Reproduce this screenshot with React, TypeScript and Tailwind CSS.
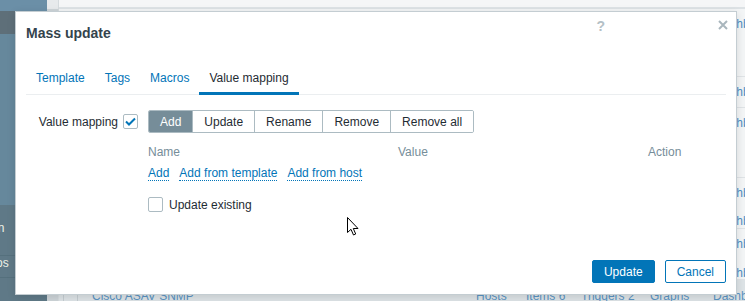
import React from "react";

const tabs = ["Template", "Tags", "Macros", "Value mapping"];
const ops = ["Add", "Update", "Rename", "Remove", "Remove all"];

function Check({ checked }: { checked?: boolean }) {
  return (
    <span className="flex h-[15px] w-[15px] shrink-0 items-center justify-center rounded-[2px] border border-[#acbbc2] bg-white">
      {checked ? (
        <svg width="11" height="9" viewBox="0 0 11 9" fill="none">
          <path d="M1 4.5 L4 7.5 L10 1.5" stroke="#0275b8" strokeWidth="2" />
        </svg>
      ) : null}
    </span>
  );
}

function Backdrop() {
  return (
    <div className="flex h-full">
      {/* Sidebar */}
      <aside className="flex w-[47px] shrink-0 flex-col overflow-hidden bg-[#66889c] text-[12px] leading-[14px] text-[#eef1e6]">
        <div className="h-[11px] bg-[#6b8fa7]" />
        <div className="h-[23px] bg-[#5e6f79]" />
        <div className="h-[171px]" />
        <div className="h-[50px] whitespace-nowrap bg-[#5f7987] pt-[16px]">
          <span className="-ml-[9px] block">on</span>
        </div>
        <div className="h-[22px] whitespace-nowrap border-t border-[#55707d] bg-[#5f7987] pt-[0px]">
          <span className="-ml-[4px] block">os</span>
        </div>
        <div className="flex-1 border-t border-[#55707d] bg-[#5f7987]" />
      </aside>

      {/* Gutter */}
      <div className="flex w-[11px] shrink-0 flex-col bg-[#cdd4d8]">
        <div className="h-[9px] bg-[#e7eaec]" />
      </div>

      {/* Table */}
      <main className="flex min-w-0 flex-1 flex-col overflow-hidden whitespace-nowrap border-l border-[#d5dbde] bg-[#f3f5f6] text-[12px] leading-[14px] text-[#4f8fc4]">
        <div className="h-[9px] shrink-0 border-b-2 border-[#dde2e5] bg-[#f5f6f7]" />
        <div className="h-[68px] shrink-0 border-b border-[#dfe3e6] pt-[8px] pl-[656px]">Dashboards</div>
        <div className="h-[31px] shrink-0 border-b border-[#dfe3e6] pt-[8px] pl-[656px]">Dashboards</div>
        <div className="h-[70px] shrink-0 border-b border-[#dfe3e6] pt-[8px] pl-[656px]">Dashboards</div>
        <div className="flex h-[51px] shrink-0 flex-col gap-[14px] border-b border-[#dfe3e6] pt-[8px] pl-[656px]">
          <span>Dashboards</span>
          <span>Dashboards</span>
        </div>
        <div className="flex h-[51px] shrink-0 flex-col gap-[15px] border-b border-[#dfe3e6] pt-[8px] pl-[656px]">
          <span>Dashboards</span>
          <span>Dashboards</span>
        </div>
        <div className="flex flex-1 bg-[#dde3e6] text-[#5a93c2]">
          <div className="w-[4px] shrink-0" />
          <div className="w-[15px] shrink-0 border-x border-[#c5cdd1]" />
          <div className="w-[398px] shrink-0 pt-[9px] pl-[14px]">Cisco ASAV SNMP</div>
          <div className="w-[50px] shrink-0 pt-[9px]">Hosts</div>
          <div className="w-[55px] shrink-0 pt-[9px]">Items 6</div>
          <div className="w-[69px] shrink-0 pt-[9px]">Triggers 2</div>
          <div className="w-[63px] shrink-0 pt-[9px]">Graphs</div>
          <div className="shrink-0 pt-[9px]">Dashboards</div>
        </div>
      </main>
    </div>
  );
}

export default function App() {
  return (
    <div className="relative h-[301px] w-[745px] overflow-hidden font-['Liberation_Sans',Arial,sans-serif] text-[12px]">
      <Backdrop />

      {/* Mass update dialog */}
      <div className="absolute left-[15px] top-[11px] flex h-[284px] w-[722px] flex-col border border-[#c4cdd2] bg-white px-[10px] pb-[11px] pt-[13px] shadow-[0_2px_8px_rgba(0,0,0,0.12)]">
        <span className="absolute right-[131px] top-[6px] text-[14px] font-bold leading-[16px] text-[#b4c0c6]">?</span>
        <svg className="absolute right-[8px] top-[8px]" width="10" height="10" viewBox="0 0 10 10">
          <path d="M1 1 L9 9 M9 1 L1 9" stroke="#a9b6bd" strokeWidth="2" />
        </svg>

        <h4 className="text-[14px] font-bold leading-[16px] text-[#34434c]">Mass update</h4>

        <div className="mt-[22px] flex border-b border-[#ebeef0]">
          {tabs.map((t, i) => {
            const active = i === tabs.length - 1;
            return (
              <div
                key={t}
                className={`-mb-px flex h-[32px] items-center border-b-[3px] px-[10px] leading-[14px] ${
                  active ? "border-[#0275b8] text-[#1f2c33]" : "border-transparent text-[#0275b8]"
                }`}
              >
                {t}
              </div>
            );
          })}
        </div>

        <div className="mt-[15px] flex gap-[10px]">
          <div className="flex h-[23px] w-[112px] items-center justify-end gap-[5px] text-[#1f2c33]">
            <span className="leading-[14px]">Value mapping</span>
            <Check checked />
          </div>

          <div className="flex flex-col">
            <div className="flex h-[23px] w-fit overflow-hidden rounded-[2px] border border-[#acbbc2]">
              {ops.map((o, i) => (
                <div
                  key={o}
                  className={`flex items-center px-[11px] leading-[14px] ${i > 0 ? "border-l border-[#acbbc2]" : ""} ${
                    i === 0 ? "bg-[#768d99] text-white" : "bg-white text-[#1f2c33]"
                  }`}
                >
                  {o}
                </div>
              ))}
            </div>

            <div className="mt-[8px] grid w-[578px] grid-cols-[250px_250px_1fr] text-[#768d99]">
              <div className="flex h-[22px] items-center leading-[14px]">Name</div>
              <div className="flex h-[22px] items-center leading-[14px]">Value</div>
              <div className="flex h-[22px] items-center leading-[14px]">Action</div>
            </div>
            <div className="flex h-[21px] items-center gap-[10px] text-[#0275b8]">
              <span className="border-b border-dotted border-[#0275b8] leading-[14px]">Add</span>
              <span className="border-b border-dotted border-[#0275b8] leading-[14px]">Add from template</span>
              <span className="border-b border-dotted border-[#0275b8] leading-[14px]">Add from host</span>
            </div>

            <div className="mt-[13px] flex items-center gap-[6px] text-[#1f2c33]">
              <Check />
              <span className="leading-[14px]">Update existing</span>
            </div>
          </div>
        </div>

        <div className="mt-auto flex justify-end gap-[10px]">
          <button className="h-[23px] rounded-[2px] border border-[#0275b8] bg-[#0275b8] px-[11px] leading-[14px] text-white">
            Update
          </button>
          <button className="h-[23px] rounded-[2px] border border-[#0275b8] bg-white px-[11px] leading-[14px] text-[#0275b8]">
            Cancel
          </button>
        </div>

        {/* Mouse pointer */}
        <svg className="absolute left-[331px] top-[205px]" width="13" height="20" viewBox="0 0 13 20">
          <path d="M0.5 0.5 L0.5 15.5 L4 12.3 L6.5 18 L8.7 17 L6.3 11.5 L11 11.5 Z" fill="white" stroke="black" strokeWidth="1" />
        </svg>
      </div>
    </div>
  );
}
